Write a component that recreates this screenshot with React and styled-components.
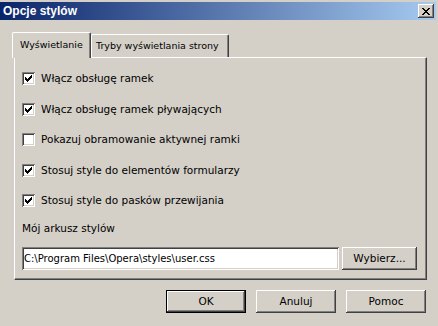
import React from "react";
import styled, { createGlobalStyle } from "styled-components";

const Global = createGlobalStyle`
  html, body { margin: 0; padding: 0; background: #d4d0c8; }
  body { font-family: "DejaVu Sans", Verdana, sans-serif; font-size: 10.5px; color: #000; }
  * { box-sizing: border-box; }
`;

const raised = `
  box-shadow: inset -1px -1px #404040, inset 1px 1px #ffffff,
    inset -2px -2px #808080, inset 2px 2px #d4d0c8;
`;
const sunken = `
  box-shadow: inset 1px 1px #808080, inset -1px -1px #ffffff,
    inset 2px 2px #404040, inset -2px -2px #d4d0c8;
`;

const Window = styled.div`
  width: 438px;
  height: 326px;
  background: #d4d0c8;
  display: flex;
  flex-direction: column;
  overflow: hidden;
`;

const TitleBar = styled.div`
  margin: 2px 2px 0 0;
  height: 18px;
  background: linear-gradient(to right, #0a246a, #a6caf0);
  display: flex;
  align-items: center;
  justify-content: space-between;
  padding: 0 2px 0 3px;
`;

const Title = styled.span`
  color: #fff;
  font-family: "Liberation Sans", Arial, sans-serif;
  font-weight: bold;
  font-size: 12px;
  line-height: 18px;
`;

const CloseButton = styled.div`
  width: 16px;
  height: 14px;
  background: #d4d0c8;
  ${raised}
  display: flex;
  align-items: center;
  justify-content: center;
`;

const TabStrip = styled.div`
  margin-top: 12px;
  padding-left: 12px;
  height: 25px;
  display: flex;
  align-items: flex-end;
`;

const Tab = styled.div`
  position: relative;
  z-index: ${(p) => (p.$active ? 1 : 0)};
  width: ${(p) => p.$w}px;
  height: ${(p) => (p.$active ? 26 : 23)}px;
  margin-bottom: ${(p) => (p.$active ? -1 : 0)}px;
  background: #d4d0c8;
  border-top: 1px solid #fff;
  border-left: 1px solid #fff;
  border-right: 1px solid #404040;
  border-radius: 2px 2px 0 0;
  box-shadow: inset -1px 0 #808080;
  display: flex;
  align-items: center;
  padding-left: ${(p) => p.$pl}px;
  padding-bottom: ${(p) => (p.$active ? 3 : 1)}px;
  font-size: 9.5px;
  white-space: nowrap;
`;

const Panel = styled.div`
  margin-left: 14px;
  width: 413px;
  height: 223px;
  border-top: 1px solid #fff;
  border-left: 1px solid #fff;
  border-right: 1px solid #404040;
  border-bottom: 1px solid #404040;
  box-shadow: inset -1px -1px #808080;
  padding: 14px 0 0 7px;
  display: flex;
  flex-direction: column;
`;

const Checks = styled.div`
  display: flex;
  flex-direction: column;
  gap: 17.5px;
`;

const CheckRow = styled.div`
  display: flex;
  align-items: center;
  height: 13px;
  gap: 6px;
  line-height: 13px;
  white-space: nowrap;
`;

const Box = styled.div`
  width: 13px;
  height: 13px;
  background: #fff;
  ${sunken}
  display: flex;
  align-items: center;
  justify-content: center;
  flex: none;
`;

const SectionLabel = styled.div`
  margin-top: 14.5px;
  line-height: 13px;
  height: 13px;
`;

const FileRow = styled.div`
  margin-top: 12.5px;
  display: flex;
  gap: 3px;
`;

const Field = styled.div`
  width: 317px;
  height: 23px;
  background: #fff;
  ${sunken}
  padding: 0 2px;
  display: flex;
  align-items: center;
  font-size: 10px;
  white-space: nowrap;
`;

const Button = styled.div`
  width: ${(p) => p.$w || 80}px;
  height: 23px;
  background: #d4d0c8;
  ${(p) =>
    p.$default
      ? `border: 1px solid #000;
         box-shadow: inset -1px -1px #404040, inset 1px 1px #ffffff,
           inset -2px -2px #808080;`
      : raised}
  display: flex;
  align-items: center;
  justify-content: center;
  padding-bottom: 1px;
`;

const Footer = styled.div`
  margin-top: 10px;
  padding-right: 12px;
  display: flex;
  justify-content: flex-end;
  gap: 10px;
`;

const Pixels = ({ rows, color = "#000" }) => {
  const w = rows[0].length;
  const h = rows.length;
  const rects = [];
  rows.forEach((r, y) =>
    r.split("").forEach((c, x) => {
      if (c === "x") rects.push(<rect key={x + "-" + y} x={x} y={y} width="1" height="1" fill={color} />);
    })
  );
  return (
    <svg width={w} height={h} viewBox={`0 0 ${w} ${h}`} shapeRendering="crispEdges">
      {rects}
    </svg>
  );
};

const CHECK = [
  "......x",
  ".....xx",
  "x...xxx",
  "xx.xxx.",
  "xxxxx..",
  ".xxx...",
  "..x....",
];

const CROSS = [
  "xx....xx",
  ".xx..xx.",
  "..xxxx..",
  "...xx...",
  "..xxxx..",
  ".xx..xx.",
  "xx....xx",
];

const options = [
  ["Włącz obsługę ramek", true],
  ["Włącz obsługę ramek pływających", true],
  ["Pokazuj obramowanie aktywnej ramki", false],
  ["Stosuj style do elementów formularzy", true],
  ["Stosuj style do pasków przewijania", true],
];

export default function App() {
  return (
    <>
      <Global />
      <Window>
        <TitleBar>
          <Title>Opcje stylów</Title>
          <CloseButton>
            <Pixels rows={CROSS} />
          </CloseButton>
        </TitleBar>
        <TabStrip>
          <Tab $active $w={79} $pl={7}>Wyświetlanie</Tab>
          <Tab $w={138} $pl={4}>Tryby wyświetlania strony</Tab>
        </TabStrip>
        <Panel>
          <Checks>
            {options.map(([label, on]) => (
              <CheckRow key={label}>
                <Box>{on && <Pixels rows={CHECK} />}</Box>
                <span>{label}</span>
              </CheckRow>
            ))}
          </Checks>
          <SectionLabel>Mój arkusz stylów</SectionLabel>
          <FileRow>
            <Field>C:\Program Files\Opera\styles\user.css</Field>
            <Button $w={75}>Wybierz...</Button>
          </FileRow>
        </Panel>
        <Footer>
          <Button $default>OK</Button>
          <Button>Anuluj</Button>
          <Button>Pomoc</Button>
        </Footer>
      </Window>
    </>
  );
}
